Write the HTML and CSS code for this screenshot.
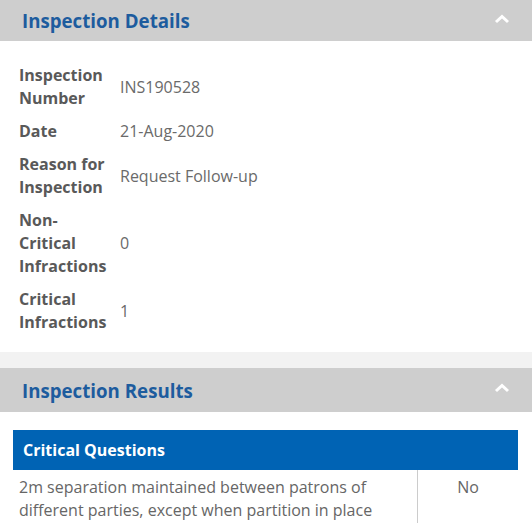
FILE: index.html
```html
<!DOCTYPE html>
<html lang="en">
<head>
<meta charset="utf-8">
<link rel="stylesheet" href="styles.css">
</head>
<body>
<section class="panel">
  <div class="panel-head">
    <h2 class="panel-title">Inspection Details</h2>
    <svg class="chev" width="16" height="10" viewBox="0 0 16 10"><path d="M2 8 L8 2.5 L14 8" fill="none" stroke="#fff" stroke-width="3"/></svg>
  </div>
  <div class="details">
    <div class="lbl">Inspection Number</div><div class="val">INS190528</div>
    <div class="lbl">Date</div><div class="val">21-Aug-2020</div>
    <div class="lbl">Reason for Inspection</div><div class="val">Request Follow-up</div>
    <div class="lbl">Non-Critical Infractions</div><div class="val">0</div>
    <div class="lbl">Critical Infractions</div><div class="val">1</div>
  </div>
</section>
<div class="spacer"></div>
<section class="panel">
  <div class="panel-head head2">
    <h2 class="panel-title">Inspection Results</h2>
    <svg class="chev" width="16" height="10" viewBox="0 0 16 10"><path d="M2 8 L8 2.5 L14 8" fill="none" stroke="#fff" stroke-width="3"/></svg>
  </div>
  <div class="results">
    <table class="qtable">
      <thead><tr><th colspan="2">Critical Questions</th></tr></thead>
      <tbody>
        <tr><td class="q">2m separation maintained between patrons of different parties, except when partition in place</td><td class="a">No</td></tr>
      </tbody>
    </table>
  </div>
</section>
</body>
</html>
```
FILE: styles.css
```css
html, body { margin: 0; padding: 0; }
body { font-family: "Open Sans", "Liberation Sans", sans-serif; background: #fff; color: #555; }
.panel-head { background: #cecece; height: 41px; display: flex; align-items: center; justify-content: space-between; padding: 0 22px 0 22px; }
.head2 { height: 44px; }
.panel-title { margin: 0; font-size: 18.7px; font-weight: 700; color: #1d5c9e; }
.chev { display: block; margin-right: 0; margin-top: -4px; }
.details { display: grid; grid-template-columns: 90px 1fr; column-gap: 11px; row-gap: 10px; padding: 23px 19px 18px 19px; font-size: 16px; line-height: 23px; align-items: center; }
.lbl { font-weight: 700; color: #595959; }
.val { color: #6a6a6a; }
.spacer { height: 16px; background: #f2f2f2; }
.results { padding: 18px 14px 0 13px; }
.qtable { width: 100%; border-collapse: collapse; font-size: 16px; }
.qtable th { background: #0063b4; color: #fff; text-align: left; font-weight: 700; height: 40px; padding: 0 10px; font-size: 16px; }
.qtable td { vertical-align: top; color: #666; line-height: 23px; padding: 6px 6px 6px 6px; }
.qtable td.a { text-align: center; border-left: 1px solid #ccc; width: 88px; padding-top: 6px; }
```
